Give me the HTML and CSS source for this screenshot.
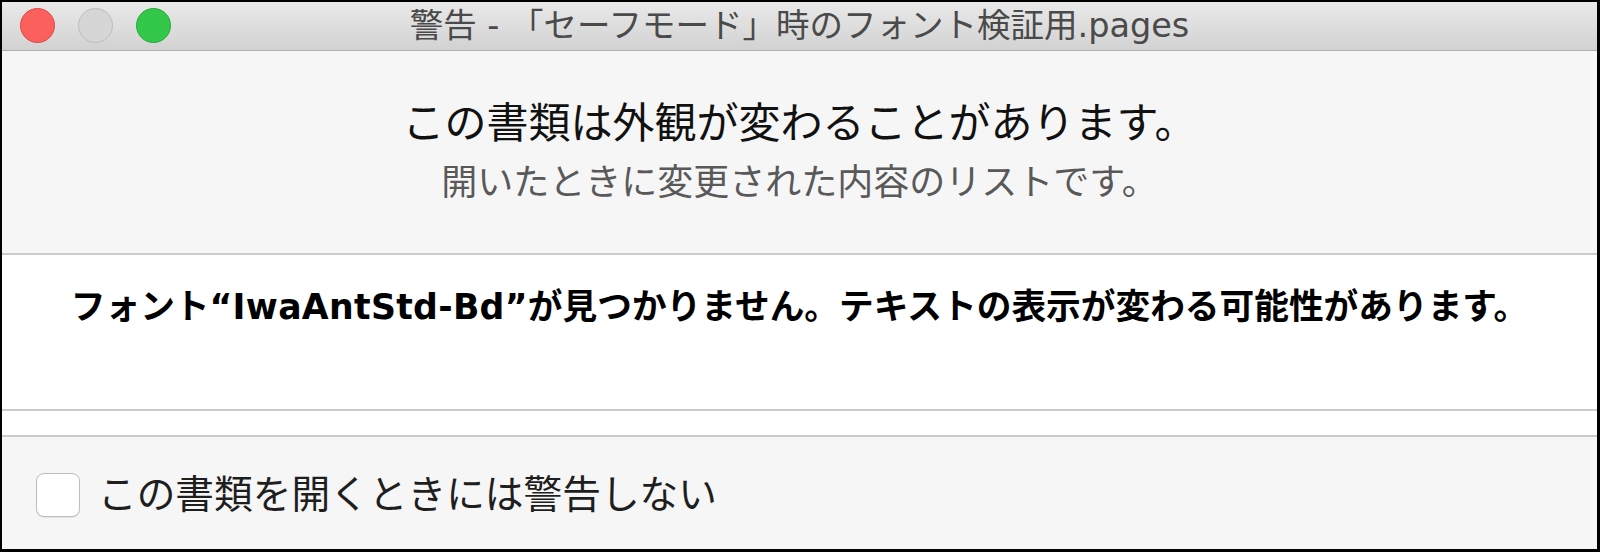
FILE: index.html
```html
<!DOCTYPE html>
<html lang="ja">
<head>
  <meta charset="UTF-8">
  <meta name="viewport" content="width=device-width, initial-scale=1.0">
  <link rel="stylesheet" href="styles.css">
  <title>警告 - 「セーフモード」時のフォント検証用.pages</title>
</head>
<body>
  <div class="window">
    <div class="titlebar">
      <div class="lights">
        <span class="light close"></span>
        <span class="light minimize"></span>
        <span class="light zoom"></span>
      </div>
      <div class="title">警告 - 「セーフモード」時のフォント検証用.pages</div>
    </div>
    <div class="header">
      <h1>この書類は外観が変わることがあります。</h1>
      <p>開いたときに変更された内容のリストです。</p>
    </div>
    <div class="list">
      <div class="item">フォント<span class="font-name">“IwaAntStd-Bd”</span>が見つかりません。テキストの表示が変わる可能性があります。</div>
    </div>
    <div class="spacer"></div>
    <div class="footer">
      <label class="check">
        <span class="box"></span>
        <span>この書類を開くときには警告しない</span>
      </label>
    </div>
  </div>
</body>
</html>
```

FILE: styles.css
```css
body {
  margin: 0;
  padding: 0;
  background-color: #000;
  font-family: "DejaVu Sans", "Noto Sans CJK JP", sans-serif;
  height: 100vh;
  overflow: hidden;
}

.window {
  margin: 2px 3px 3px 2px;
  height: calc(100vh - 5px);
  display: flex;
  flex-direction: column;
  background-color: #f6f6f6;
}

.titlebar {
  height: 48px;
  flex-shrink: 0;
  display: flex;
  align-items: center;
  position: relative;
  background: linear-gradient(#e9e9e9, #d2d2d2);
  border-bottom: 1px solid #afafaf;
}

.lights {
  position: absolute;
  left: 18px;
  top: 6px;
  display: flex;
  gap: 23px;
}

.light {
  width: 33px;
  height: 33px;
  border-radius: 50%;
  border: 1px solid;
}

.close {
  background-color: #fc605c;
  border-color: #df4744;
}

.minimize {
  background-color: #d6d6d6;
  border-color: #bdbdbd;
}

.zoom {
  background-color: #34c84a;
  border-color: #25a83a;
}

.title {
  flex: 1;
  text-align: center;
  font-size: 33.5px;
  line-height: 48px;
  color: #4a4a4a;
}

.header {
  height: 204px;
  flex-shrink: 0;
  box-sizing: border-box;
  padding-top: 49px;
  text-align: center;
  border-bottom: 2px solid #cbcbcb;
}

.header h1 {
  margin: 0;
  font-size: 42px;
  font-weight: normal;
  line-height: 48px;
  color: #111;
}

.header p {
  margin: 15px 0 0;
  font-size: 36px;
  line-height: 40px;
  color: #595959;
}

.list {
  height: 156px;
  flex-shrink: 0;
  box-sizing: border-box;
  padding-top: 32px;
  background-color: #fff;
  border-bottom: 2px solid #cbcbcb;
}

.item {
  text-align: center;
  font-size: 34.7px;
  font-weight: bold;
  line-height: 40px;
  color: #000;
}

.font-name {
  letter-spacing: 0.3px;
}

.spacer {
  height: 26px;
  flex-shrink: 0;
  box-sizing: border-box;
  background-color: #fff;
  border-bottom: 2px solid #cbcbcb;
}

.footer {
  flex: 1;
  display: flex;
  align-items: center;
  padding-left: 34px;
  padding-top: 4px;
}

.check {
  display: flex;
  align-items: center;
  gap: 18px;
  font-size: 38.7px;
  line-height: 44px;
  color: #1e1e1e;
}

.box {
  width: 44px;
  height: 44px;
  box-sizing: border-box;
  border: 1.5px solid #bdbdbd;
  border-radius: 8px;
  background-color: #fff;
  box-shadow: 0 1px 1px rgba(0, 0, 0, 0.08);
}
```
